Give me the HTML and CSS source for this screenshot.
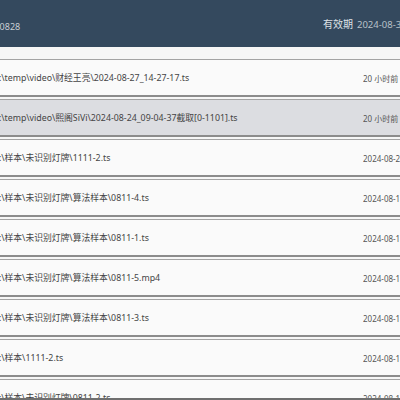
FILE: index.html
```
<!DOCTYPE html>
<html lang="zh-CN">
<head>
<meta charset="utf-8">
<title>文件列表</title>
<link rel="stylesheet" href="styles.css">
</head>
<body>
<div class="app">
  <header class="topbar">
    <span class="build">20240828</span>
    <div class="expiry"><span class="expiry-label">有效期</span><span class="expiry-date">2024-08-31</span></div>
  </header>
  <ul class="list">
    <li class="item"><span class="path">E:\temp\video\财经王亮\2024-08-27_14-27-17.ts</span><span class="time">20 小时前</span></li>
    <li class="item selected"><span class="path">E:\temp\video\熙阁SiVi\2024-08-24_09-04-37截取[0-1101].ts</span><span class="time">20 小时前</span></li>
    <li class="item"><span class="path">E:\样本\未识别灯牌\1111-2.ts</span><span class="time">2024-08-27 16:02</span></li>
    <li class="item"><span class="path">E:\样本\未识别灯牌\算法样本\0811-4.ts</span><span class="time">2024-08-14 10:21</span></li>
    <li class="item"><span class="path">E:\样本\未识别灯牌\算法样本\0811-1.ts</span><span class="time">2024-08-14 10:18</span></li>
    <li class="item"><span class="path">E:\样本\未识别灯牌\算法样本\0811-5.mp4</span><span class="time">2024-08-14 10:15</span></li>
    <li class="item"><span class="path">E:\样本\未识别灯牌\算法样本\0811-3.ts</span><span class="time">2024-08-14 10:12</span></li>
    <li class="item"><span class="path">E:\样本\1111-2.ts</span><span class="time">2024-08-14 10:05</span></li>
    <li class="item"><span class="path">E:\样本\未识别灯牌\0811-2.ts</span><span class="time">2024-08-14 09:58</span></li>
  </ul>
</div>
</body>
</html>
```
FILE: styles.css
```
html, body {
  margin: 0;
  padding: 0;
  overflow: hidden;
  background: #f4f4f4;
}
body {
  width: 400px;
  height: 400px;
  font-family: "Noto Sans", "Noto Sans CJK SC", sans-serif;
}
.app {
  width: 464px;
  margin-left: -24px;
  height: 400px;
  box-sizing: border-box;
  border-bottom: 2px solid #6f6f6f;
  overflow: hidden;
  background: #f6f6f6;
}
.topbar {
  height: 47px;
  background: #34495e;
  display: flex;
  align-items: center;
  padding-left: 3px;
  box-sizing: border-box;
}
.build {
  flex: 1;
  font-size: 9px;
  color: #c9ced4;
  padding-top: 5px;
}
.expiry {
  width: 117px;
  flex: none;
  display: flex;
  align-items: baseline;
  gap: 4px;
  white-space: nowrap;
}
.expiry-label {
  font-size: 10px;
  color: #dfe3e7;
}
.expiry-date {
  font-size: 9.5px;
  color: #b9c1c9;
}
.list {
  list-style: none;
  margin: 0;
  padding: 12px 0 0 0;
}
.item {
  height: 38px;
  box-sizing: border-box;
  margin-bottom: 2px;
  border: 1px solid #a3a3a3;
  border-bottom: 2px solid #8c8c8c;
  background: #fafafa;
  display: flex;
  align-items: center;
  padding-left: 17px;
  white-space: nowrap;
}
.item.selected {
  background: #dcdde1;
}
.path {
  flex: 1;
  font-size: 8.8px;
  color: #444;
  overflow: hidden;
}
.time {
  width: 76px;
  flex: none;
  font-size: 8px;
  color: #555;
  overflow: hidden;
  padding-top: 2px;
}
```
